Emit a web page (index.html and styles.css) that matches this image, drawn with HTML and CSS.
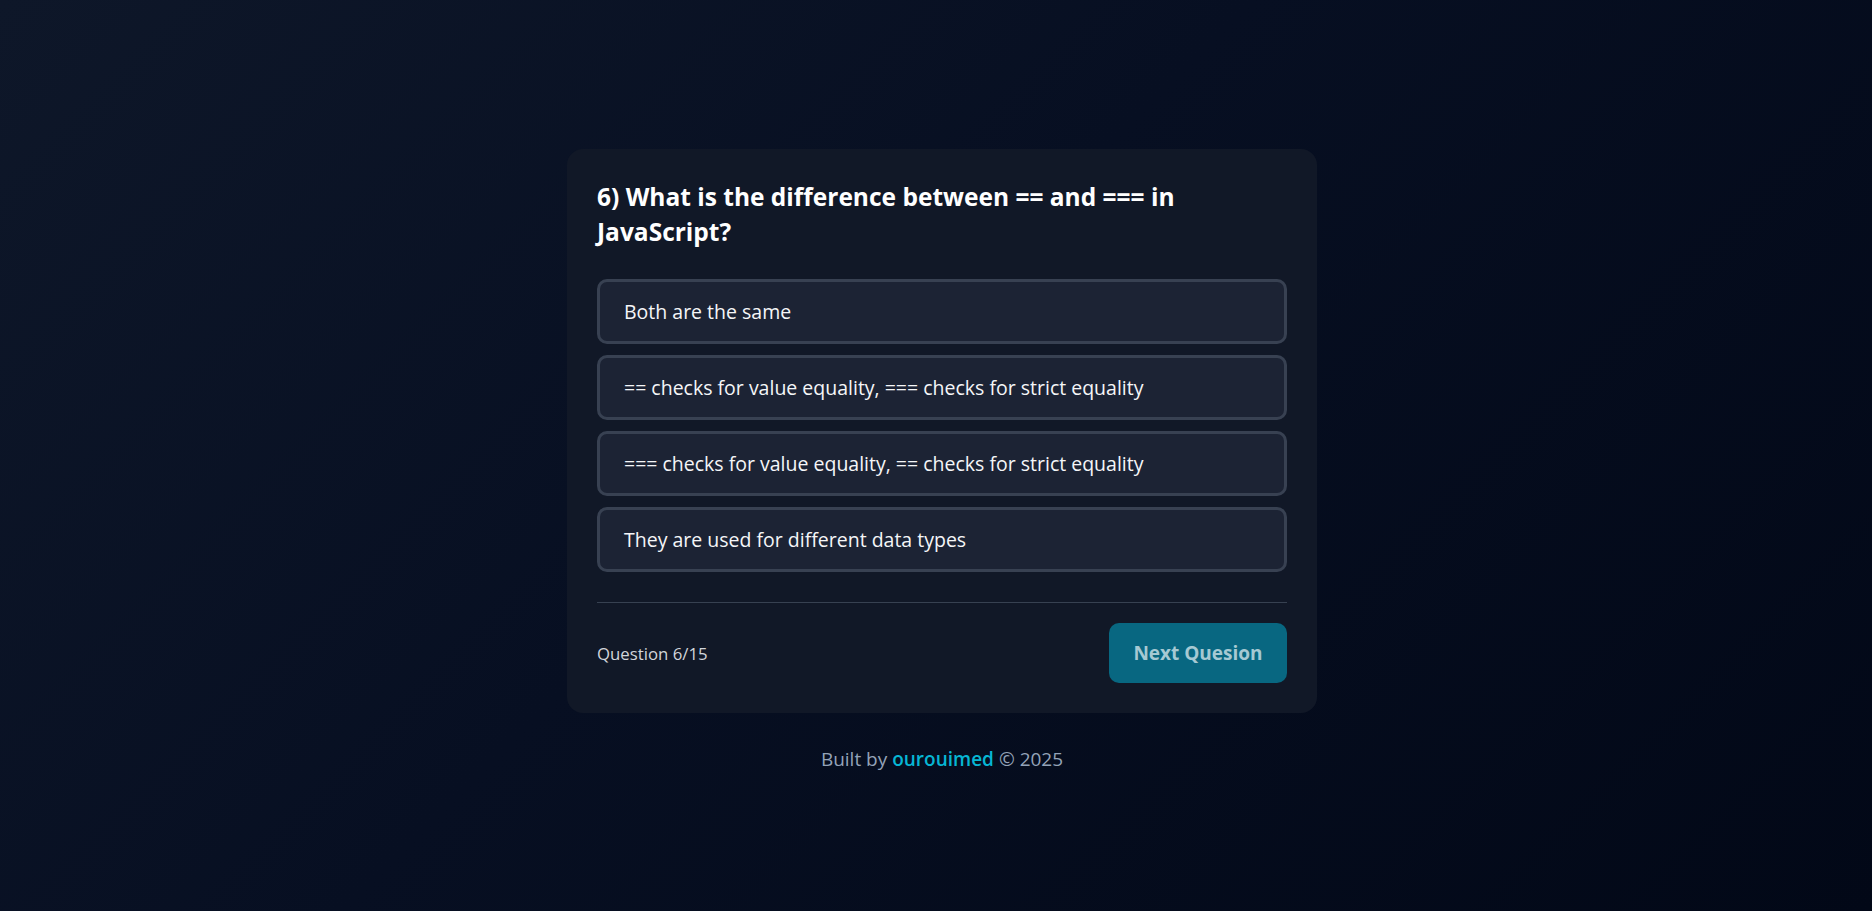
FILE: index.html
```html
<!DOCTYPE html>
<html lang="en">
<head>
<meta charset="utf-8">
<title>Quiz</title>
<link rel="stylesheet" href="styles.css">
</head>
<body>
<main class="page">
  <section class="card">
    <h1 class="question">6) What is the difference between == and === in JavaScript?</h1>
    <ul class="options">
      <li class="option">Both are the same</li>
      <li class="option">== checks for value equality, === checks for strict equality</li>
      <li class="option">=== checks for value equality, == checks for strict equality</li>
      <li class="option">They are used for different data types</li>
    </ul>
    <div class="card-footer">
      <span class="progress">Question 6/15</span>
      <button class="next" type="button">Next Quesion</button>
    </div>
  </section>
  <p class="credit">Built by <a class="author" href="#">ourouimed</a> © 2025</p>
</main>
</body>
</html>
```

FILE: styles.css
```css
* { box-sizing: border-box; }
html, body { margin: 0; padding: 0; }
body {
  min-height: 911px;
  background: linear-gradient(135deg, #0e1729 0%, #070f22 45%, #020817 100%);
  font-family: "Open Sans", "Noto Sans", sans-serif;
  color: #fff;
}
.page {
  display: flex;
  flex-direction: column;
  align-items: center;
  padding-top: 149px;
  padding-left: 12px;
}
.card {
  width: 750px;
  background: #111827;
  border-radius: 16px;
  padding: 30px;
}
.question {
  margin: 0 0 30px;
  font-size: 24.5px;
  line-height: 35px;
  font-weight: 700;
  color: #fff;
}
.options {
  list-style: none;
  margin: 0;
  padding: 0;
  display: flex;
  flex-direction: column;
  gap: 11px;
}
.option {
  background: #1c2334;
  border: 3px solid #384152;
  border-radius: 10px;
  padding: 14.5px 24px;
  font-size: 19.5px;
  line-height: 30px;
  color: #f5f6f8;
}
.card-footer {
  margin-top: 30px;
  border-top: 1px solid #374151;
  padding-top: 20px;
  display: flex;
  justify-content: space-between;
  align-items: center;
}
.progress {
  font-size: 16.8px;
  color: #d1d5db;
}
.next {
  font-family: inherit;
  font-size: 19px;
  line-height: 30px;
  font-weight: 700;
  white-space: nowrap;
  color: #a6c9d3;
  background: #086781;
  border: none;
  border-radius: 10px;
  padding: 15px 0;
  height: 60px;
  width: 178px;
  text-align: center;
}
.credit {
  margin: 31px 0 0;
  font-size: 19px;
  line-height: 30px;
  color: #94a3b8;
}
.author {
  color: #06b6d4;
  font-weight: 600;
  text-decoration: none;
}
```
